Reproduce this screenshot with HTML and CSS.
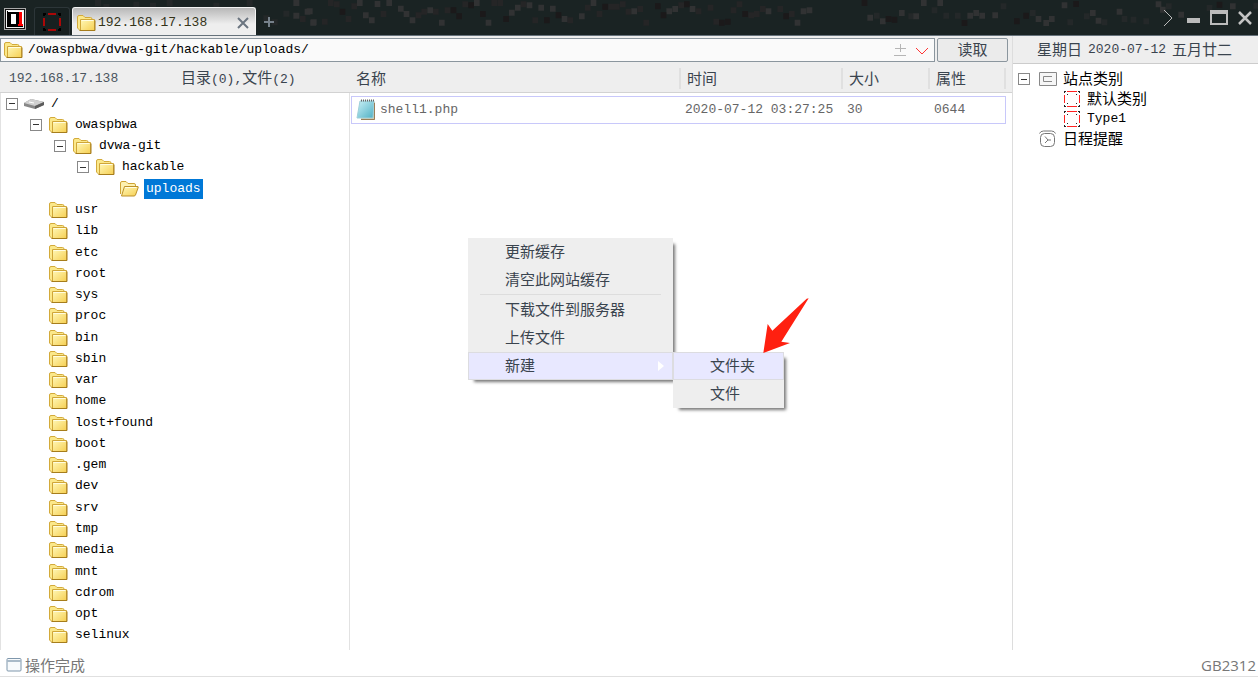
FILE: index.html
```html
<!DOCTYPE html>
<html lang="zh-CN">
<head>
<meta charset="utf-8">
<title>192.168.17.138</title>
<link rel="stylesheet" href="styles.css">
</head>
<body>
<svg class="defs" aria-hidden="true">
  <defs>
    <linearGradient id="gold" x1="0" y1="0" x2="1" y2="1"><stop offset="0" stop-color="#fff8b8"/><stop offset="1" stop-color="#f6cf52"/></linearGradient>
    <linearGradient id="page" x1="0" y1="0" x2="1" y2="1"><stop offset="0" stop-color="#c9f0f6"/><stop offset="1" stop-color="#4fb0c4"/></linearGradient>
    <symbol id="folder" viewBox="0 0 20 18">
      <path d="M1.500 14V3q0-1.500 1.500-1.500h4l2 2h5.500q1.500 0 1.500 1.500v3L4 16.500z" fill="#fbe88a" stroke="#d3aa3a"/>
      <path d="M4.500 5.500h14v11h-14z" fill="url(#gold)" stroke="#d0a638"/>
      <path d="M3.500 16.500h15.500V6.500" fill="none" stroke="#a67d1c"/>
      <path d="M5.500 6.500h12" stroke="#fffde2"/>
    </symbol>
    <symbol id="folder-open" viewBox="0 0 20 18">
      <path d="M1.500 14V3q0-1.500 1.500-1.500h4l2 2h6q1.500 0 1.500 1.500v3" fill="#fdf1b0" stroke="#cfa434"/>
      <path d="M5.500 6.500h13.500q.5 0 0 1.500l-2.500 7q-.5 1-1.500 1H2.500z" fill="url(#gold)" stroke="#bd9028"/>
      <path d="M6 7.500h11.500" stroke="#fffde2"/>
    </symbol>
    <symbol id="frame" viewBox="0 0 18 18">
      <path d="M4 1.500h10M4 16.500h10M1.500 5v8M16.500 5v8" fill="none" stroke="#f22"/>
      <path d="M1 1.500h2M1.500 1v2M15 1.500h2M16.500 1v2M1 16.500h2M1.500 15v2M15 16.500h2M16.500 15v2M4 4.500h1M13 4.500h1M4 13.500h1M13 13.500h1" stroke="#222"/>
    </symbol>
  </defs>
</svg>

<header class="titlebar">
  <svg class="specks" viewBox="0 0 3774 105" preserveAspectRatio="xMinYMin slice" aria-hidden="true">
    <g transform="translate(0 9)" fill="none" stroke-width="18">
      <g stroke="#242829">
        <path d="M285 0h18M310 12h18M400 5h18M450 8h18M500 0h18M640 8h18M740 0h18M790 46h18M815 58h18M850 32h18"/>
        <path transform="translate(900)" stroke="#252526" d="M0 48h17M66 56h17M84 0h17M102 4h17M137 48h17M154 10h17M242 33h17M347 37h17M364 26h17M399 26h17M434 22h17M487 4h17M574 0h17M592 0h17M662 4h17M697 52h17M802 52h17M855 14h17M890 33h17M925 11h17M942 11h17M960 4h17M977 26h17M1012 18h17M1030 59h17M1135 7h17M1187 25h17M1223 14h17M1240 56h17M1292 22h17M1310 4h17M1345 37h17M1362 33h17M1380 18h17M1432 18h17M1467 33h17"/>
        <path transform="translate(2580)" d="M42 38h17M145 40h17M215 22h17M250 38h17M285 38h17M422 10h17M510 30h17M622 58h17M672 40h17M725 58h17M785 48h17M812 50h17M850 55h17M918 10h17M1040 15h17M1180 8h17"/>
      </g>
      <g stroke="#313233">
        <path d="M880 0h18M920 25h18M880 38h18M932 58h18"/>
        <path transform="translate(900)" d="M14 26h17M31 59h17M171 0h17M189 37h17M207 52h17M224 3h17M259 0h17M294 17h17M311 33h17M329 52h17M382 22h17M417 59h17M522 0h17M557 59h17M627 29h17M645 14h17M680 7h17M715 14h17M750 17h17M785 48h17M837 40h17M872 0h17M994 25h17M1099 25h17M1117 18h17M1169 18h17M1397 25h17M1484 59h17M1502 25h17M1520 22h17"/>
        <path transform="translate(2580)" d="M22 44h17M60 55h17M117 30h17M160 40h17M183 0h17M232 0h17M322 38h17M340 30h17M358 38h17M397 37h17M527 48h17M550 60h17M567 48h17M605 7h17M690 30h17M707 53h17M770 26h17M887 4h17M900 20h17M955 35h17M1110 10h17"/>
      </g>
      <g stroke="#1b191a">
        <path transform="translate(900)" d="M119 26h17M452 22h17M469 40h17M505 7h17M540 33h17M610 48h17M732 52h17M767 37h17M907 11h17M1065 10h17M1082 37h17M1152 4h17M1257 59h17M1275 56h17M1327 33h17M1450 40h17"/>
        <path transform="translate(2580)" d="M5 0h17M77 48h17M95 50h17M305 60h17M462 55h17M490 38h17M640 3h17M1070 5h17"/>
      </g>
    </g>
  </svg>
  <svg class="app-icon" viewBox="0 0 22 24" aria-hidden="true">
    <path d="M0 1h22v22H0z" fill="#aaa"/>
    <path d="M1 2h20v20H1z" fill="#111"/>
    <path d="M2 3h18v18H2z" fill="#f4f4f4"/>
    <path d="M3 4h16v16H3z" fill="#000"/>
    <path d="M4 4h15v15H4z" fill="#fff"/>
    <path d="M4 5h11v14H4z" fill="#000"/>
    <path d="M7 7h5v10H7z" fill="#fff"/>
    <path d="M15 5h3v12h1v2h-5v-2h1z" fill="#f00"/>
  </svg>
  <button class="home-tab" aria-label="站点">
    <svg viewBox="0 0 20 20" aria-hidden="true"><path d="M6 2h8M6 18h8M2 6v8M18 6v8" stroke="#d00" stroke-width="1.500"/><path d="M2 4V2h2M16 2h2v2M2 16v2h2M16 18h2v-2" fill="none" stroke="#000" stroke-width="2"/></svg>
  </button>
  <div class="tab">
    <svg class="folder" aria-hidden="true"><use href="#folder"/></svg>
    <span class="tab-name">192.168.17.138</span>
    <button class="tab-close" aria-label="关闭标签"><svg viewBox="0 0 12 12" aria-hidden="true"><path d="M1 1l10 10M11 1L1 11" stroke="#6b7580" stroke-width="2"/></svg></button>
  </div>
  <button class="tab-add" aria-label="新标签"><svg viewBox="0 0 12 12" aria-hidden="true"><path d="M6 1v10M1 6h10" stroke="#76818b" stroke-width="2"/></svg></button>
  <div class="window-buttons">
    <button aria-label="更多"><svg viewBox="0 0 16 18" aria-hidden="true"><path d="M4 1l8 8-8 8" fill="none" stroke="#bbb"/></svg></button>
    <button aria-label="最小化"><svg viewBox="0 0 16 18" aria-hidden="true"><path d="M2 9h13v5H2z" fill="#bbb"/></svg></button>
    <button aria-label="最大化"><svg class="wide" viewBox="0 0 18 18" aria-hidden="true"><path d="M0 1h18v15H0zM2 5v9h14V5z" fill="#bbb" fill-rule="evenodd"/></svg></button>
    <button aria-label="关闭"><svg viewBox="0 0 16 18" aria-hidden="true"><path d="M2 3l12 12M14 3L2 15" stroke="#c4c4c4" stroke-width="2.500"/></svg></button>
  </div>
</header>

<div class="workspace">
  <main class="manager">
    <form class="pathbar">
      <div class="path-box">
        <svg class="folder" aria-hidden="true"><use href="#folder"/></svg>
        <input class="path-input" type="text" aria-label="路径" value="/owaspbwa/dvwa-git/hackable/uploads/">
        <button type="button" class="path-tool" aria-label="书签"><svg viewBox="0 0 14 14" aria-hidden="true"><path d="M7.500 1v8M2 5.500h11M1 12.500h12" fill="none" stroke="#b5b5b5"/></svg></button>
        <button type="button" class="path-tool" aria-label="历史"><svg viewBox="0 0 14 14" aria-hidden="true"><path d="M1 5l6 6 6-6" fill="none" stroke="#f33"/></svg></button>
      </div>
      <button type="button" class="read">读取</button>
    </form>
    <div class="panes">
      <nav class="tree-pane" aria-label="目录">
        <div class="tree-head"><span class="host mono">192.168.17.138</span><span>目录<span class="mono">(0),</span>文件<span class="mono">(2)</span></span></div>
        <ul class="tree mono">
          <li><button class="toggle" aria-label="折叠"></button><svg class="folder" viewBox="0 0 20 18" aria-hidden="true"><path d="M0 8l7-4 13 3v3l-9 4-11-3z" fill="#888"/><path d="M0 8l7-4 13 3-9 4z" fill="#d0d0d0"/><path d="M11 11l9-4v3l-9 4z" fill="#5c5c5c"/><path d="M5 7l5 1" stroke="#fff"/></svg><span class="name">/</span></li>
          <li class="l1"><button class="toggle" aria-label="折叠"></button><svg class="folder" aria-hidden="true"><use href="#folder"/></svg><span class="name">owaspbwa</span></li>
          <li class="l2"><button class="toggle" aria-label="折叠"></button><svg class="folder" aria-hidden="true"><use href="#folder"/></svg><span class="name">dvwa-git</span></li>
          <li class="l3"><button class="toggle" aria-label="折叠"></button><svg class="folder" aria-hidden="true"><use href="#folder"/></svg><span class="name">hackable</span></li>
          <li class="l4 leaf"><svg class="folder" aria-hidden="true"><use href="#folder-open"/></svg><span class="name selected">uploads</span></li>
          <li class="l1 leaf"><svg class="folder" aria-hidden="true"><use href="#folder"/></svg><span class="name">usr</span></li>
          <li class="l1 leaf"><svg class="folder" aria-hidden="true"><use href="#folder"/></svg><span class="name">lib</span></li>
          <li class="l1 leaf"><svg class="folder" aria-hidden="true"><use href="#folder"/></svg><span class="name">etc</span></li>
          <li class="l1 leaf"><svg class="folder" aria-hidden="true"><use href="#folder"/></svg><span class="name">root</span></li>
          <li class="l1 leaf"><svg class="folder" aria-hidden="true"><use href="#folder"/></svg><span class="name">sys</span></li>
          <li class="l1 leaf"><svg class="folder" aria-hidden="true"><use href="#folder"/></svg><span class="name">proc</span></li>
          <li class="l1 leaf"><svg class="folder" aria-hidden="true"><use href="#folder"/></svg><span class="name">bin</span></li>
          <li class="l1 leaf"><svg class="folder" aria-hidden="true"><use href="#folder"/></svg><span class="name">sbin</span></li>
          <li class="l1 leaf"><svg class="folder" aria-hidden="true"><use href="#folder"/></svg><span class="name">var</span></li>
          <li class="l1 leaf"><svg class="folder" aria-hidden="true"><use href="#folder"/></svg><span class="name">home</span></li>
          <li class="l1 leaf"><svg class="folder" aria-hidden="true"><use href="#folder"/></svg><span class="name">lost+found</span></li>
          <li class="l1 leaf"><svg class="folder" aria-hidden="true"><use href="#folder"/></svg><span class="name">boot</span></li>
          <li class="l1 leaf"><svg class="folder" aria-hidden="true"><use href="#folder"/></svg><span class="name">.gem</span></li>
          <li class="l1 leaf"><svg class="folder" aria-hidden="true"><use href="#folder"/></svg><span class="name">dev</span></li>
          <li class="l1 leaf"><svg class="folder" aria-hidden="true"><use href="#folder"/></svg><span class="name">srv</span></li>
          <li class="l1 leaf"><svg class="folder" aria-hidden="true"><use href="#folder"/></svg><span class="name">tmp</span></li>
          <li class="l1 leaf"><svg class="folder" aria-hidden="true"><use href="#folder"/></svg><span class="name">media</span></li>
          <li class="l1 leaf"><svg class="folder" aria-hidden="true"><use href="#folder"/></svg><span class="name">mnt</span></li>
          <li class="l1 leaf"><svg class="folder" aria-hidden="true"><use href="#folder"/></svg><span class="name">cdrom</span></li>
          <li class="l1 leaf"><svg class="folder" aria-hidden="true"><use href="#folder"/></svg><span class="name">opt</span></li>
          <li class="l1 leaf"><svg class="folder" aria-hidden="true"><use href="#folder"/></svg><span class="name">selinux</span></li>
        </ul>
      </nav>
      <section class="file-pane">
        <table class="files">
          <colgroup><col><col class="c-time"><col class="c-size"><col class="c-attr"></colgroup>
          <thead><tr><th><span>名称</span></th><th><span>时间</span></th><th><span>大小</span></th><th><span>属性</span></th></tr></thead>
          <tbody class="mono"><tr>
            <td><span class="file"><svg class="note" viewBox="0 0 20 22" aria-hidden="true"><path d="M6 3h13v18H5z" fill="#d8c9a6"/><path d="M4 2h14l-1 17H1z" fill="url(#page)" stroke="#9fd0da" stroke-width="1"/><path d="M5 1.500h13" stroke="#666" stroke-width="2" stroke-dasharray="1 1"/><path d="M5 20.500h13.500V4" fill="none" stroke="#9a7f58"/></svg>shell1.php</span></td>
            <td>2020-07-12 03:27:25</td><td>30</td><td>0644</td>
          </tr></tbody>
        </table>
      </section>
    </div>
  </main>
  <aside class="side">
    <div class="side-head"><span>星期日</span><span class="mono">2020-07-12</span><span>五月廿二</span></div>
    <ul class="side-tree">
      <li><button class="toggle" aria-label="折叠"></button><svg class="side-icon" viewBox="0 0 18 18" aria-hidden="true"><path d="M.5 2.500h17v13H.5z" fill="#f6f6f6" stroke="#888"/><path d="M13 6.500H4.500v5H13" fill="none" stroke="#888"/></svg><span>站点类别</span></li>
      <li class="child"><svg class="side-icon" aria-hidden="true"><use href="#frame"/></svg><span>默认类别</span></li>
      <li class="child"><svg class="side-icon" aria-hidden="true"><use href="#frame"/></svg><span class="mono">Type1</span></li>
      <li class="root"><svg class="side-icon" viewBox="0 0 18 18" aria-hidden="true"><rect x="1.500" y="3.500" width="14" height="13" rx="4" fill="none" stroke="#777"/><path d="M.5 3.500q1-2.500 4-2.500h8q3 0 4 2.500M6 6.500l3 3.500h3M9 10l-3 3" fill="none" stroke="#777"/></svg><span>日程提醒</span></li>
    </ul>
  </aside>
</div>

<footer class="status">
  <svg class="status-icon" viewBox="0 0 16 14" aria-hidden="true"><rect x="1" y=".5" width="14" height="12.500" rx="1" fill="#f7fafc" stroke="#7f97ac"/><path d="M1 3h14" stroke="#a9bac8" stroke-width="2"/></svg>
  <span>操作完成</span><span class="encoding">GB2312</span>
</footer>

<div class="menu" role="menu">
  <button role="menuitem">更新缓存</button>
  <button role="menuitem">清空此网站缓存</button>
  <hr>
  <button role="menuitem">下载文件到服务器</button>
  <button role="menuitem">上传文件</button>
  <button role="menuitem" class="active">新建<svg class="more" viewBox="0 0 6 10" aria-hidden="true"><path d="M0 0l6 5-6 5z" fill="#fff"/></svg></button>
</div>
<div class="menu submenu" role="menu">
  <button role="menuitem" class="active">文件夹</button>
  <button role="menuitem">文件</button>
</div>
<svg class="pointer" viewBox="0 0 138 165" aria-hidden="true"><path d="M137 1L55 131l26 4L1 165l13-87 14 20L131 2z" fill="#ff2010"/></svg>
</body>
</html>
```
FILE: styles.css
```css
* { box-sizing: border-box; }

body {
  margin: 0;
  height: 100vh;
  display: flex;
  flex-direction: column;
  background: #fff;
  color: #3a444e;
  font: 15px/20px "Liberation Sans", "Noto Sans CJK SC", sans-serif;
}

button {
  border: 0;
  padding: 0;
  background: none;
  color: inherit;
  font: inherit;
}

svg { display: block; flex: none; }
ul { list-style: none; margin: 0; padding: 0; }

.defs { position: absolute; width: 0; height: 0; }
.mono { font-family: "Liberation Mono", "Noto Sans CJK SC", monospace; font-size: 13px; }
.folder { width: 20px; height: 18px; }

/* Title bar */
.titlebar {
  position: relative;
  flex: none;
  display: flex;
  align-items: flex-end;
  height: 36px;
  padding: 0 5px 0 4px;
  background: #1a2323;
  border-bottom: 1px solid #66727b;
}
.specks { position: absolute; left: 0; top: 0; width: 1258px; height: 35px; }
.titlebar > :not(.specks) { position: relative; }
.app-icon { width: 22px; height: 24px; margin-bottom: 4px; }
.home-tab {
  height: 28px;
  width: 36px;
  margin-left: 8px;
  display: grid;
  place-items: center;
  border: 1px solid #2d3639;
  border-bottom: 0;
  border-radius: 3px 3px 0 0;
  background: #172020;
}
.home-tab svg { width: 20px; height: 20px; }
.tab {
  display: flex;
  align-items: center;
  width: 184px;
  height: 28px;
  margin-left: 2px;
  padding: 2px 6px 0 3px;
  border-radius: 3px 3px 0 0;
  background: linear-gradient(#b8b8b8, #eee 60%);
  border: 1px solid #f4f4f4;
  border-bottom: 0;
  color: #333318;
  font: 13px/20px "Liberation Mono", monospace;
}
.tab-name { margin-left: 2px; }
.tab-close { margin-left: auto; }
.tab-close svg, .tab-add svg { width: 12px; height: 12px; }
.tab-add { margin: 0 0 7px 7px; }
.window-buttons { display: flex; gap: 9px; margin: 0 0 8px auto; }
.window-buttons svg { width: 16px; height: 18px; }
.window-buttons .wide { width: 18px; }

/* Work area */
.workspace { flex: 1; display: flex; min-height: 0; }
.manager { flex: 1; display: flex; flex-direction: column; min-width: 0; }
.pathbar {
  display: flex;
  gap: 2px;
  height: 27px;
  padding: 2px 4px 1px 0;
  background: #eee;
}
.path-box {
  flex: 1;
  display: flex;
  align-items: center;
  padding: 0 5px 0 2px;
  background: #fafafa;
  border: 1px solid #8b969e;
}
.path-input {
  flex: 1;
  min-width: 0;
  margin-left: 5px;
  padding: 0;
  border: 0;
  background: none;
  color: #000;
  font: 13px/20px "Liberation Mono", monospace;
}
.path-tool { margin-left: 8px; }
.path-tool svg { width: 14px; height: 14px; }
.read { width: 71px; border: 1px solid #8b969e; border-radius: 2px; background: #ebebeb; }

.panes { flex: 1; display: flex; min-height: 0; }
.tree-pane { width: 350px; display: flex; flex-direction: column; }
.tree-head {
  display: flex;
  align-items: center;
  height: 30px;
  padding: 2px 0 0 9px;
  background: #eee;
  border-bottom: 1px solid #d2d2d2;
}
.host { width: 172px; color: #4a5560; }
.tree {
  flex: 1;
  display: grid;
  grid-auto-rows: 1fr;
  padding-bottom: 4px;
  border: solid #e2e2e2;
  border-width: 0 1px;
  color: #000;
}
.tree li { display: flex; align-items: center; padding-left: 5px; }
.tree .l1 { padding-left: 29px; }
.tree .l2 { padding-left: 53px; }
.tree .l3 { padding-left: 76px; }
.tree .l4 { padding-left: 100px; }
.tree .leaf::before { content: ""; width: 12px; }
.tree .folder { margin-left: 6px; }
.name { margin-left: 5px; padding: 0 2px; }
.selected { background: #0078d7; color: #fff; }
.toggle {
  flex: none;
  width: 12px;
  height: 12px;
  border: 1px solid #888;
  background: linear-gradient(#333, #333) center / 6px 1px no-repeat #fff;
}

.file-pane {
  flex: 1;
  min-width: 0;
  padding: 0 6px 0 1px;
  background: linear-gradient(#eee 29px, #d2d2d2 29px, #d2d2d2 30px, #fff 30px);
}
.files { width: 100%; table-layout: fixed; border-collapse: separate; border-spacing: 0; }
.c-time { width: 162px; }
.c-size { width: 87px; }
.c-attr { width: 76px; }
.files th { height: 33px; padding: 5px 0 7px; text-align: left; font-weight: 400; line-height: 21px; }
.files th span { display: block; padding-left: 6px; border-right: 2px solid #e0e0e0; }
.files th:first-child span { padding-left: 5px; }
.files td {
  height: 28px;
  padding: 0 0 0 4px;
  border: solid #c8c8fa;
  border-width: 1px 0;
  color: #666;
  white-space: nowrap;
}
.files td:first-child { border-left-width: 1px; }
.files td:last-child { border-right-width: 1px; }
.file { display: flex; align-items: center; gap: 4px; }
.note { width: 20px; height: 22px; }

.side { width: 246px; border-left: 1px solid #ddd; }
.side-head {
  display: flex;
  gap: 6px;
  height: 28px;
  padding: 4px 0 0 24px;
  background: #eee;
  border-bottom: 1px solid #ccc;
}
.side-tree { padding: 5px 0 0 5px; color: #000; }
.side-tree li { display: flex; align-items: center; height: 20px; }
.side-icon { width: 18px; height: 18px; margin: 0 6px 0 9px; }
.side-tree .root { padding-left: 12px; }
.side-tree .child { padding-left: 36px; }

/* Status bar */
.status {
  flex: none;
  display: flex;
  align-items: center;
  height: 27px;
  padding: 3px 2px 0 6px;
  border-bottom: 1px solid #e0e0e0;
  color: #777;
  font-family: "Open Sans", "Noto Sans CJK SC", sans-serif;
}
.status-icon { width: 16px; height: 14px; margin-right: 3px; }
.encoding { margin-left: auto; }

/* Context menus */
.menu {
  position: absolute;
  left: 468px;
  top: 238px;
  width: 205px;
  background: #eee;
  box-shadow: 4px 4px 3px -2px #777;
}
.submenu { left: 673px; top: 352px; width: 111px; }
.menu button {
  display: flex;
  align-items: center;
  width: 100%;
  height: 28px;
  padding: 0 8px 0 36px;
  border: 1px solid transparent;
}
.menu .active { background: #e8e8ff; border-color: #dcdce0; }
.menu hr { height: 1px; margin: 0 12px 1px; border: 0; background: #ddd; }
.more { width: 6px; height: 10px; margin-left: auto; }
.pointer { position: absolute; left: 763px; top: 298px; width: 46px; height: 55px; }
```
